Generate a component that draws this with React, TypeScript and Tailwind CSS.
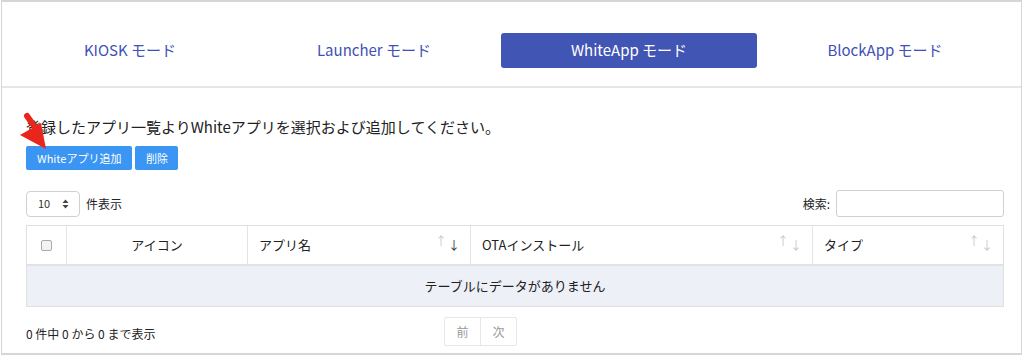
import React from "react";

const font = { fontFamily: '"Noto Sans CJK JP", "Noto Sans", sans-serif' };

function SortIcon({ active }: { active?: boolean }) {
  return (
    <span className="flex items-end gap-[1px] text-[12px] leading-none">
      <span className="text-[#c8c8c8] -translate-y-[4px]">↑</span>
      <span className={active ? "text-[#333]" : "text-[#c8c8c8]"}>↓</span>
    </span>
  );
}

export default function App() {
  const tabs = ["KIOSK モード", "Launcher モード", "WhiteApp モード", "BlockApp モード"];
  return (
    <div className="w-[1024px] h-[356px] bg-white pl-px pr-[2px] pb-px overflow-hidden" style={font}>
      <div className="relative h-full border-x border-b-2 border-t-2 border-[#d6d6d6] text-[#222]">
        {/* Tabs */}
        <div className="flex items-center pt-[31px] pb-[18px] border-b-2 border-[#e6e6e6]">
          <div className="w-[256px] h-[35px] flex items-center justify-center text-[15px] text-[#3f51b5]">{tabs[0]}</div>
          <div className="w-[243px] h-[35px] pr-[11px] flex items-center justify-center text-[15px] text-[#3f51b5]">{tabs[1]}</div>
          <div className="w-[256px] h-[35px] flex items-center justify-center rounded-[3px] bg-[#4155b4] text-[15px] text-white">{tabs[2]}</div>
          <div className="w-[256px] h-[35px] flex items-center justify-center text-[15px] text-[#3f51b5]">{tabs[3]}</div>
        </div>

        <div className="pl-[24px] pr-[17px]">
          <p className="mt-[28px] text-[15px] leading-[22px]">
            登録したアプリ一覧よりWhiteアプリを選択および追加してください。
          </p>
          <div className="mt-[8px] flex gap-[3px]">
            <button className="h-[24px] px-[11px] rounded-[2px] bg-[#3a95f3] text-white text-[11px]">Whiteアプリ追加</button>
            <button className="h-[24px] px-[10.5px] rounded-[2px] bg-[#3a95f3] text-white text-[11px]">削除</button>
          </div>

          <div className="mt-[20px] flex items-center justify-between">
            <div className="flex items-center gap-[6px]">
              <div className="w-[54px] h-[26px] rounded-[4px] border border-[#d0d0d0] flex items-center pl-[11px] gap-[12px] text-[11px] text-[#333]">
                <span>10</span>
                <svg width="7" height="10" viewBox="0 0 7 10"><path d="M3.5 0.5 L6.5 4 H0.5 Z M3.5 9.5 L6.5 6 H0.5 Z" fill="#444" /></svg>
              </div>
              <span className="text-[12px]">件表示</span>
            </div>
            <div className="flex items-center gap-[6px]">
              <span className="text-[12px]">検索:</span>
              <div className="w-[168px] h-[27px] rounded-[3px] border border-[#d0d0d0]" />
            </div>
          </div>

          {/* Table */}
          <div className="mt-[8px] border border-[#e0e0e0] text-[13px]">
            <div className="flex h-[40px] border-b-2 border-[#e2e2e2]">
              <div className="w-[40px] flex items-center justify-center border-r border-[#e4e4e4]">
                <span className="w-[11px] h-[11px] rounded-[2px] border border-[#aaa] bg-[#f2f2f2]" />
              </div>
              <div className="w-[181px] flex items-center justify-center border-r border-[#e4e4e4]">アイコン</div>
              <div className="w-[223px] flex items-center justify-between pl-[11px] pr-[10px] border-r border-[#e4e4e4]">
                <span>アプリ名</span>
                <SortIcon active />
              </div>
              <div className="w-[342px] flex items-center justify-between pl-[11px] pr-[10px] border-r border-[#e4e4e4]">
                <span>OTAインストール</span>
                <SortIcon />
              </div>
              <div className="flex-1 flex items-center justify-between pl-[11px] pr-[10px]">
                <span>タイプ</span>
                <SortIcon />
              </div>
            </div>
            <div className="h-[40px] bg-[#eef0f8] flex items-center justify-center">テーブルにデータがありません</div>
          </div>

          <div className="mt-[10px] flex items-center">
            <span className="text-[12px] w-[418px] translate-y-[2px]">0 件中 0 から 0 まで表示</span>
            <div className="flex border border-[#e6e6e6] rounded-[2px] text-[12px] text-[#999]">
              <span className="w-[36px] h-[27px] flex items-center justify-center border-r border-[#e6e6e6]">前</span>
              <span className="w-[35px] h-[27px] flex items-center justify-center">次</span>
            </div>
          </div>
        </div>

        {/* red arrow annotation */}
        <svg className="absolute left-[17px] top-[110px] overflow-visible" width="32" height="40" viewBox="0 0 32 40">
          <path d="M8 4 L18 18" stroke="#e8261c" strokeWidth="6" strokeLinecap="round" />
          <path d="M1 23 L22 11 L27 37 Z" fill="#e8261c" />
        </svg>
      </div>
    </div>
  );
}
